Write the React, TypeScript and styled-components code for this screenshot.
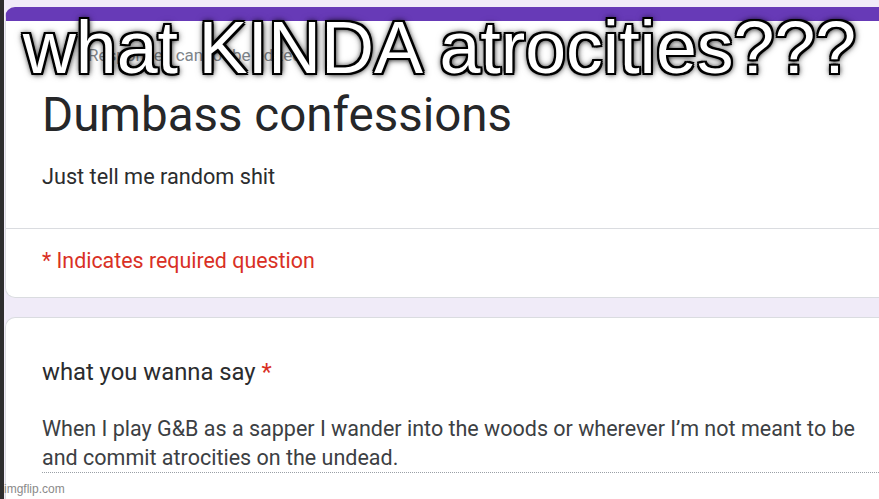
import React from "react";
import styled, { createGlobalStyle } from "styled-components";

const Global = createGlobalStyle`
  html, body {
    margin: 0;
    padding: 0;
    width: 879px;
    height: 499px;
    overflow: hidden;
    background: #2e2e2e;
  }
  * { box-sizing: border-box; }
`;

const Frame = styled.div`
  position: relative;
  width: 879px;
  height: 499px;
  overflow: hidden;
  padding-left: 4px;
  background: #2e2e2e;
`;

const Page = styled.div`
  height: 100%;
  background: #f0ebf8;
  padding: 7px 0 0 1px;
  display: flex;
  flex-direction: column;
  gap: 19px;
  font-family: Roboto, "Liberation Sans", sans-serif;
  color: #202124;
`;

const Card = styled.section<{ $accent?: boolean; $open?: boolean }>`
  margin-right: -16px;
  background: #fff;
  border: 1px solid #dadce0;
  border-radius: 10px;
  ${(p) => (p.$accent ? "border-top: 14px solid #673ab7;" : "")}
  ${(p) => (p.$open ? "flex: 1; border-bottom: none; border-radius: 10px 10px 0 0;" : "")}
  overflow: hidden;
`;

const Block = styled.div<{ $pad: string; $divider?: boolean }>`
  padding: ${(p) => p.$pad};
  ${(p) => (p.$divider ? "border-bottom: 1px solid #dadce0;" : "")}
`;

const Notice = styled.div`
  font-size: 17px;
  color: #80868b;
  line-height: 20px;
  padding-left: 46px;
`;

const Title = styled.h1`
  margin: 22px 0 0;
  font-size: 47.5px;
  font-weight: 400;
  line-height: 56px;
  letter-spacing: 0;
  color: #262729;
`;

const Description = styled.p`
  margin: 20px 0 0;
  font-size: 21.7px;
  line-height: 28px;
  color: #2b2c2e;
`;

const Required = styled.p`
  margin: 0;
  font-size: 21.4px;
  line-height: 28px;
  color: #d93025;
`;

const Question = styled.h2`
  margin: 0;
  font-size: 23.8px;
  font-weight: 400;
  line-height: 30px;
  color: #2b2c2e;
`;

const Star = styled.span`
  color: #d93025;
`;

const Answer = styled.p`
  margin: 27px 0 0;
  width: 837px;
  padding-right: 12px;
  font-size: 21.5px;
  line-height: 29px;
  color: #3c4043;
  padding-bottom: 0;
  border-bottom: 1px dotted #9aa0a6;
`;

const Caption = styled.div`
  position: absolute;
  top: 12px;
  left: 0;
  right: 0;
  text-align: center;
  font-family: "Liberation Sans", Arial, sans-serif;
  font-size: 73.5px;
  line-height: 72px;
  color: #fff;
  white-space: nowrap;
  text-shadow:
    2px 2px 0 #000, -2px 2px 0 #000, 2px -2px 0 #000, -2px -2px 0 #000,
    0 2px 0 #000, 0 -2px 0 #000, 2px 0 0 #000, -2px 0 0 #000,
    0 0 5px rgba(0, 0, 0, 0.9), 0 0 8px rgba(0, 0, 0, 0.6), 1px 1px 6px rgba(0, 0, 0, 0.7);
`;

const Watermark = styled.div`
  position: absolute;
  left: 4px;
  bottom: 3px;
  font-family: "Liberation Sans", Arial, sans-serif;
  font-size: 12px;
  color: #8a8a8a;
`;

export default function App() {
  return (
    <>
      <Global />
      <Frame>
        <Page>
          <Card $accent>
            <Block $pad="24px 0 37px 36px" $divider>
              <Notice>Responses cannot be edited</Notice>
              <Title>Dumbass confessions</Title>
              <Description>Just tell me random shit</Description>
            </Block>
            <Block $pad="18px 0 22px 36px">
              <Required>* Indicates required question</Required>
            </Block>
          </Card>
          <Card $open>
            <Block $pad="39px 0 0 36px">
              <Question>
                what you wanna say <Star>*</Star>
              </Question>
              <Answer>
                When I play G&amp;B as a sapper I wander into the woods or wherever I’m not meant to be
                and commit atrocities on the undead.
              </Answer>
            </Block>
          </Card>
        </Page>
        <Caption>what KINDA atrocities???</Caption>
        <Watermark>imgflip.com</Watermark>
      </Frame>
    </>
  );
}
